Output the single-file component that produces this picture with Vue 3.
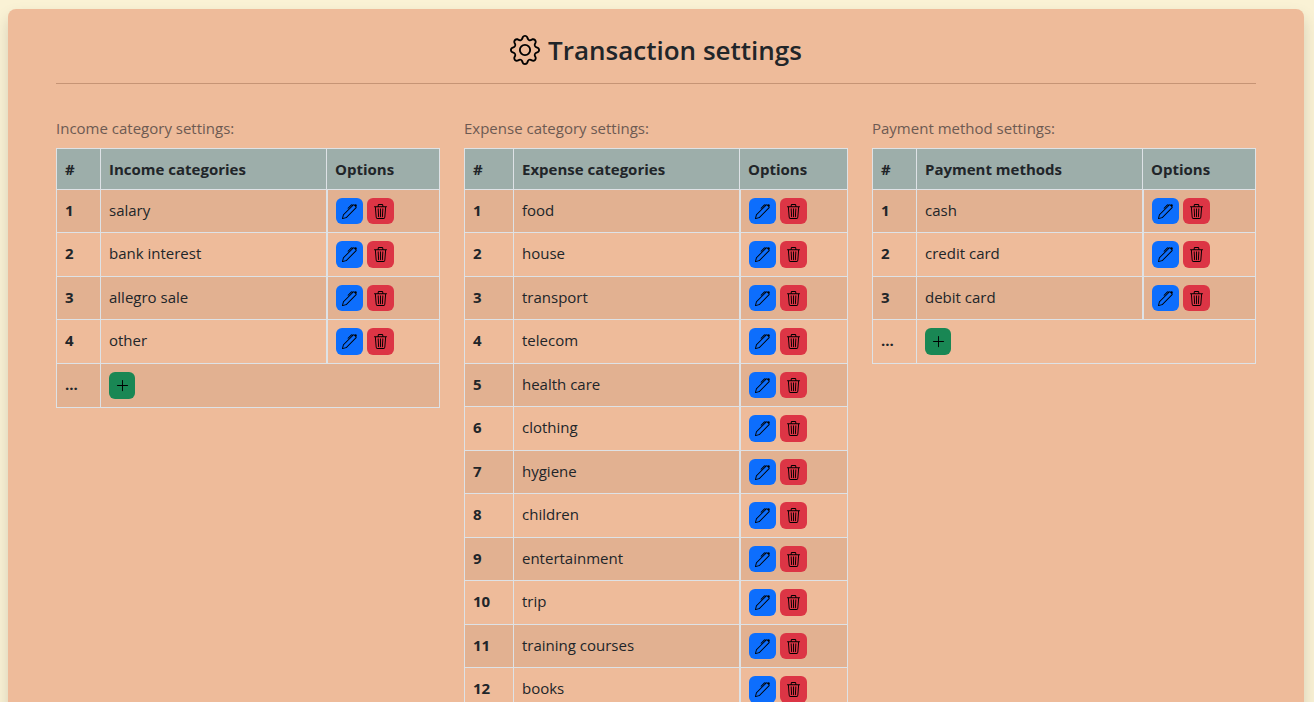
<script setup>
const sections = [
  {
    id: 'income',
    label: 'Income category settings:',
    heading: 'Income categories',
    items: ['salary', 'bank interest', 'allegro sale', 'other'],
    canAdd: true
  },
  {
    id: 'expense',
    label: 'Expense category settings:',
    heading: 'Expense categories',
    items: [
      'food', 'house', 'transport', 'telecom', 'health care', 'clothing',
      'hygiene', 'children', 'entertainment', 'trip', 'training courses', 'books'
    ],
    canAdd: false
  },
  {
    id: 'payment',
    label: 'Payment method settings:',
    heading: 'Payment methods',
    items: ['cash', 'credit card', 'debit card'],
    canAdd: true
  }
]
</script>

<template>
  <main class="panel">
    <header class="title-bar">
      <svg class="gear" viewBox="0 0 16 16" fill="currentColor" aria-hidden="true">
        <path d="M8 4.754a3.246 3.246 0 1 0 0 6.492 3.246 3.246 0 0 0 0-6.492zM5.754 8a2.246 2.246 0 1 1 4.492 0 2.246 2.246 0 0 1-4.492 0z" />
        <path d="M9.796 1.343c-.527-1.79-3.065-1.79-3.592 0l-.094.319a.873.873 0 0 1-1.255.52l-.292-.16c-1.64-.892-3.433.902-2.54 2.541l.159.292a.873.873 0 0 1-.52 1.255l-.319.094c-1.79.527-1.79 3.065 0 3.592l.319.094a.873.873 0 0 1 .52 1.255l-.16.292c-.892 1.64.901 3.434 2.541 2.54l.292-.159a.873.873 0 0 1 1.255.52l.094.319c.527 1.79 3.065 1.79 3.592 0l.094-.319a.873.873 0 0 1 1.255-.52l.292.16c1.64.893 3.434-.902 2.54-2.541l-.159-.292a.873.873 0 0 1 .52-1.255l.319-.094c1.79-.527 1.79-3.065 0-3.592l-.319-.094a.873.873 0 0 1-.52-1.255l.16-.292c.893-1.64-.902-3.433-2.541-2.54l-.292.159a.873.873 0 0 1-1.255-.52l-.094-.319zm-2.633.283c.246-.835 1.428-.835 1.674 0l.094.319a1.873 1.873 0 0 0 2.693 1.115l.291-.16c.764-.415 1.6.42 1.184 1.185l-.159.292a1.873 1.873 0 0 0 1.116 2.692l.318.094c.835.246.835 1.428 0 1.674l-.319.094a1.873 1.873 0 0 0-1.115 2.693l.16.291c.415.764-.42 1.6-1.185 1.184l-.291-.159a1.873 1.873 0 0 0-2.693 1.116l-.094.318c-.246.835-1.428.835-1.674 0l-.094-.319a1.873 1.873 0 0 0-2.692-1.115l-.292.16c-.764.415-1.6-.42-1.184-1.185l.159-.291A1.873 1.873 0 0 0 1.945 8.93l-.319-.094c-.835-.246-.835-1.428 0-1.674l.319-.094A1.873 1.873 0 0 0 3.06 4.377l-.16-.292c-.415-.764.42-1.6 1.185-1.184l.292.159a1.873 1.873 0 0 0 2.692-1.115l.094-.319z" />
      </svg>
      <h1>Transaction settings</h1>
    </header>

    <div class="columns">
      <section v-for="s in sections" :key="s.id" :class="s.id">
        <p :id="s.id + '-label'" class="label">{{ s.label }}</p>
        <table :aria-labelledby="s.id + '-label'">
          <colgroup>
            <col class="col-number" />
            <col />
            <col class="col-options" />
          </colgroup>
          <thead>
            <tr>
              <th scope="col">#</th>
              <th scope="col">{{ s.heading }}</th>
              <th scope="col">Options</th>
            </tr>
          </thead>
          <tbody>
            <tr v-for="(item, i) in s.items" :key="item">
              <th scope="row">{{ i + 1 }}</th>
              <td>{{ item }}</td>
              <td class="options">
                <button type="button" class="btn edit" :aria-label="'Edit ' + item">
                  <svg viewBox="0 0 16 16" fill="currentColor" aria-hidden="true">
                    <path d="m13.498.795.149-.149a1.207 1.207 0 1 1 1.707 1.708l-.149.148a1.5 1.5 0 0 1-.059 2.059L4.854 14.854a.5.5 0 0 1-.233.131l-4 1a.5.5 0 0 1-.606-.606l1-4a.5.5 0 0 1 .131-.232l9.642-9.642a.5.5 0 0 0-.642.056L6.854 4.854a.5.5 0 1 1-.708-.708L9.44.854A1.5 1.5 0 0 1 11.5.796a1.5 1.5 0 0 1 1.998-.001zm-.644.766a.5.5 0 0 0-.707 0L1.95 11.756l-.764 3.057 3.057-.764L14.44 3.854a.5.5 0 0 0 0-.708l-1.585-1.585z" />
                  </svg>
                </button>
                <button type="button" class="btn remove" :aria-label="'Delete ' + item">
                  <svg viewBox="0 0 16 16" fill="currentColor" aria-hidden="true">
                    <path d="M6.5 1h3a.5.5 0 0 1 .5.5v1H6v-1a.5.5 0 0 1 .5-.5ZM11 2.5v-1A1.5 1.5 0 0 0 9.5 0h-3A1.5 1.5 0 0 0 5 1.5v1H2.506a.58.58 0 0 0-.01 0H1.5a.5.5 0 0 0 0 1h.538l.853 10.66A2 2 0 0 0 4.885 16h6.23a2 2 0 0 0 1.994-1.84l.853-10.66h.538a.5.5 0 0 0 0-1h-.995a.59.59 0 0 0-.01 0H11Zm1.958 1-.846 10.58a1 1 0 0 1-.997.92h-6.23a1 1 0 0 1-.997-.92L3.042 3.5h9.916Zm-7.487 1a.5.5 0 0 1 .528.47l.5 8.5a.5.5 0 0 1-.998.06L5 5.03a.5.5 0 0 1 .47-.53Zm5.058 0a.5.5 0 0 1 .47.53l-.5 8.5a.5.5 0 1 1-.998-.06l.5-8.5a.5.5 0 0 1 .528-.47ZM8 4.5a.5.5 0 0 1 .5.5v8.5a.5.5 0 0 1-1 0V5a.5.5 0 0 1 .5-.5Z" />
                  </svg>
                </button>
              </td>
            </tr>
            <tr v-if="s.canAdd">
              <th scope="row">...</th>
              <td colspan="2">
                <button type="button" class="btn add" :aria-label="'Add to ' + s.heading">
                  <svg viewBox="0 0 16 16" fill="currentColor" aria-hidden="true">
                    <path d="M8 2a.5.5 0 0 1 .5.5v5h5a.5.5 0 0 1 0 1h-5v5a.5.5 0 0 1-1 0v-5h-5a.5.5 0 0 1 0-1h5v-5A.5.5 0 0 1 8 2Z" />
                  </svg>
                </button>
              </td>
            </tr>
          </tbody>
        </table>
      </section>
    </div>
  </main>
</template>

<style>
body {
  background: #faf2d5;
}
#app {
  display: flow-root;
}
</style>

<style scoped>
.panel {
  box-sizing: border-box;
  margin: 9px 10px 0 8px;
  padding: 24px 48px;
  border-radius: 8px;
  background: #eebb9a;
  box-shadow: 0 8px 16px rgba(0, 0, 0, 0.15);
  color: #212529;
  font-family: "Segoe UI", "Open Sans", "Noto Sans", sans-serif;
  font-size: 15px;
  line-height: 24px;
}

.title-bar {
  display: flex;
  justify-content: center;
  align-items: center;
  gap: 8px;
  height: 34px;
  padding-bottom: 16px;
  border-bottom: 1px solid #c69475;
}

.gear {
  width: 30px;
  height: 30px;
  color: #000;
}

h1 {
  margin: 0;
  font-size: 26px;
  font-weight: 600;
  line-height: 36px;
}

.columns {
  display: grid;
  grid-template-columns: repeat(3, minmax(0, 1fr));
  gap: 24px;
  align-items: start;
  padding-top: 32px;
}

.label {
  margin: 0 0 8px;
  color: #6d5a52;
}

table {
  width: 100%;
  table-layout: fixed;
  border-collapse: collapse;
}

.col-number {
  width: 44px;
}

.col-options {
  width: 113px;
}

.expense .col-number {
  width: 49px;
}

.expense .col-options {
  width: 108px;
}

tr {
  border: solid #dee2e6;
  border-width: 1px 0;
}

th,
td {
  padding: 8px;
  border: solid #dee2e6;
  border-width: 0 1px;
  text-align: left;
  vertical-align: top;
}

thead tr {
  background: #9daeaa;
}

tbody tr:nth-child(odd) {
  background: #e2b191;
}

.options {
  display: flex;
  gap: 4px;
}

.btn {
  display: flex;
  justify-content: center;
  align-items: center;
  width: 27px;
  height: 26px;
  padding: 0;
  border: 0;
  border-radius: 6px;
  color: #000;
  cursor: pointer;
}

tr:nth-child(even) .btn,
.btn.add {
  height: 27px;
}

.btn svg {
  width: 15px;
  height: 15px;
}

.edit {
  background: #0d6efd;
}

.remove {
  background: #dc3545;
}

.btn.add {
  width: 26px;
  background: #198754;
}
</style>
